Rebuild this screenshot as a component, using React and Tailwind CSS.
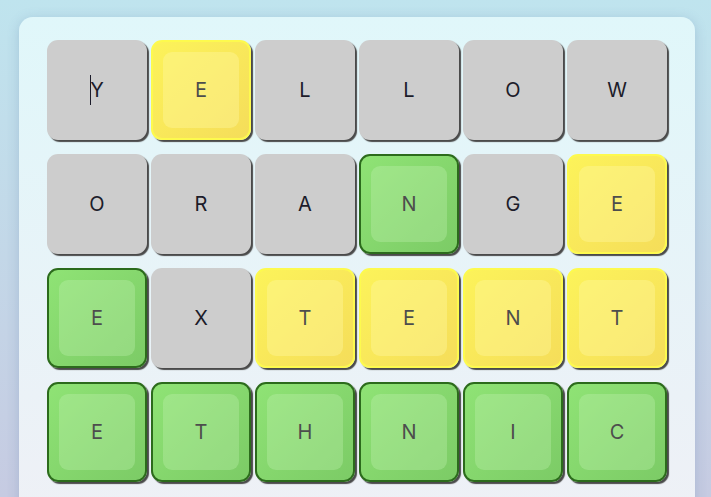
import React from "react";

const rows = [
  [["Y", "g"], ["E", "y"], ["L", "g"], ["L", "g"], ["O", "g"], ["W", "g"]],
  [["O", "g"], ["R", "g"], ["A", "g"], ["N", "n"], ["G", "g"], ["E", "y"]],
  [["E", "n"], ["X", "g"], ["T", "y"], ["E", "y"], ["N", "y"], ["T", "y"]],
  [["E", "n"], ["T", "n"], ["H", "n"], ["N", "n"], ["I", "n"], ["C", "n"]],
];

function Tile({ ch, kind, caret }) {
  if (kind === "g") {
    return (
      <div className="relative w-[100px] h-[100px] rounded-[11px] bg-[#cdcdcd] shadow-[2px_2px_1px_#4a4a4a] flex items-center justify-center text-[20px] text-[#1c1c2a]">
        {caret && <span className="absolute left-[43px] top-[35px] w-px h-[30px] bg-[#1c1c2a]" />}
        {ch}
      </div>
    );
  }
  const yellow = kind === "y";
  return (
    <div
      className={
        "relative w-[100px] h-[100px] rounded-[11px] shadow-[2px_2px_1px_#4a4a4a] flex items-center justify-center p-[10px] " +
        (yellow
          ? "border-2 border-[#fdfa4e] bg-gradient-to-br from-[#fcf35a] to-[#f5dd5a]"
          : "border-2 border-[#2c6b1c] bg-gradient-to-br from-[#8fe375] to-[#7ccb66]")
      }
    >
      <div
        className={
          "w-full h-full rounded-[9px] flex items-center justify-center text-[20px] text-[#4d4d4d] " +
          (yellow ? "bg-[#fff8a0]/40" : "bg-[#c0f0b0]/35")
        }
      >
        {ch}
      </div>
    </div>
  );
}

export default function App() {
  return (
    <div
      className="w-[711px] h-[497px] overflow-hidden bg-gradient-to-b from-[#bfe4ee] to-[#c6cbe2] pt-[17px] pl-[19px]"
      style={{ fontFamily: "Inter, 'Noto Sans', sans-serif" }}
    >
      <div className="w-[676px] h-[520px] rounded-[14px] bg-gradient-to-b from-[#e0f7fa] to-[#eff0f6] shadow-[0_2px_12px_rgba(80,110,160,0.25)] px-[28px] pt-[23px] flex flex-col gap-[14px]">
        {rows.map((r, i) => (
          <div key={i} className="flex gap-[4px]">
            {r.map(([ch, k], j) => (
              <Tile key={j} ch={ch} kind={k} caret={i === 0 && j === 0} />
            ))}
          </div>
        ))}
      </div>
    </div>
  );
}
